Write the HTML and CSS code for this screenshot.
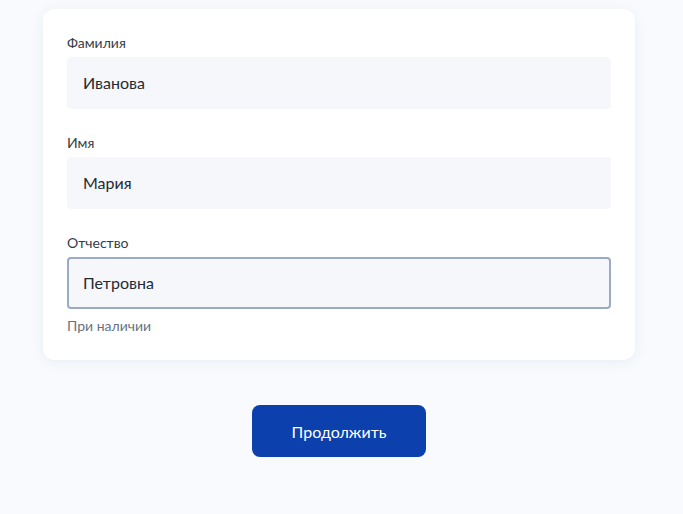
FILE: index.html
```html
<!DOCTYPE html>
<html lang="ru">
<head>
<meta charset="utf-8">
<link rel="stylesheet" href="styles.css">
</head>
<body>
<main class="page">
  <section class="card">
    <div class="field">
      <label class="label">Фамилия</label>
      <div class="input">Иванова</div>
    </div>
    <div class="field">
      <label class="label">Имя</label>
      <div class="input">Мария</div>
    </div>
    <div class="field field-last">
      <label class="label">Отчество</label>
      <div class="input input-focus">Петровна</div>
      <div class="hint">При наличии</div>
    </div>
  </section>
  <div class="actions">
    <button class="btn">Продолжить</button>
  </div>
</main>
</body>
</html>
```
FILE: styles.css
```css
* { box-sizing: border-box; }
html, body {
  margin: 0;
  padding: 0;
  background: #f8fafd;
  font-family: Lato, "Noto Sans", sans-serif;
  color: #0b1f33;
}
.page {
  width: 683px;
  height: 514px;
  padding: 9px 48px 0 43px;
}
.card {
  width: 592px;
  background: #fff;
  border-radius: 12px;
  box-shadow: 0 2px 12px rgba(140, 160, 190, 0.14);
  padding: 24px;
}
.field { margin-bottom: 24px; }
.field-last { margin-bottom: 0; }
.label {
  display: block;
  font-size: 14px;
  line-height: 20px;
  color: #333d47;
  margin-bottom: 4px;
}
.input {
  height: 52px;
  background: #f5f7fa;
  border-radius: 4px;
  border: 2px solid transparent;
  padding: 0 14px;
  font-size: 16px;
  line-height: 48px;
  color: #1f2a35;
}
.input-focus {
  border-color: #9aabc2;
}
.hint {
  margin-top: 7px;
  font-size: 14px;
  line-height: 20px;
  color: #66727f;
}
.actions {
  display: flex;
  justify-content: center;
  padding-top: 45px;
}
.btn {
  width: 174px;
  height: 52px;
  border: none;
  border-radius: 8px;
  background: #0c40ad;
  color: #fff;
  font-family: Lato, "Noto Sans", sans-serif;
  font-size: 16px;
}
```
